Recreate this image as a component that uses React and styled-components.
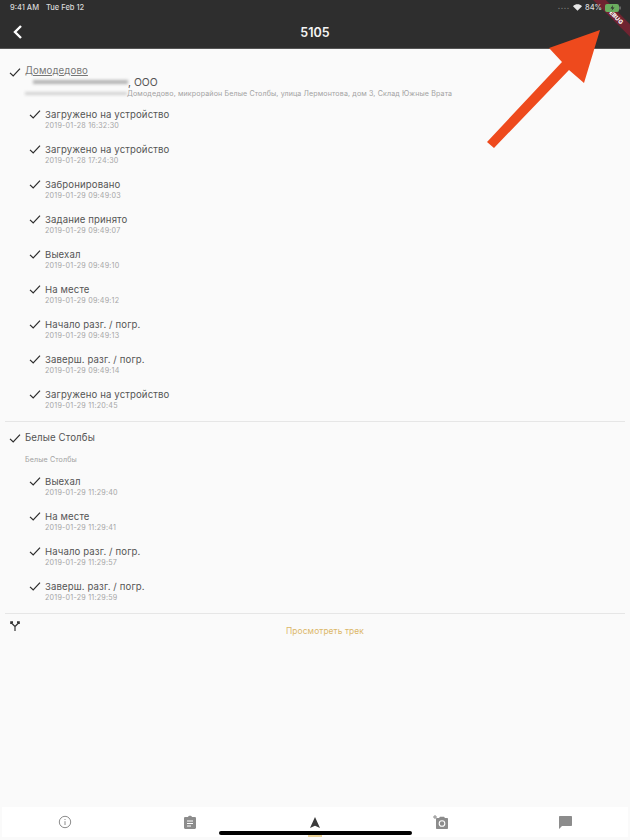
import React from "react";
import styled, { createGlobalStyle } from "styled-components";

const Global = createGlobalStyle`
  html, body { margin: 0; padding: 0; background: #fafafa; }
  body { font-family: "Inter", "Liberation Sans", sans-serif; }
`;

const Page = styled.div`
  position: relative;
  width: 630px;
  height: 840px;
  overflow: hidden;
  display: flex;
  flex-direction: column;
  background: #fafafa;
`;

const Header = styled.header`
  height: 49px;
  flex: none;
  background: #2e2e2e;
  border-bottom: 1px solid #555;
  box-sizing: border-box;
  color: #fff;
  display: flex;
  flex-direction: column;
`;

const StatusBar = styled.div`
  height: 15px;
  padding: 0 9px 0 10px;
  display: flex;
  align-items: center;
  justify-content: space-between;
  font-size: 7.5px;
  font-weight: 500;
  color: #d8d8d8;
`;

const StatusGroup = styled.div`
  position: relative;
  z-index: 2;
  display: flex;
  align-items: center;
  gap: ${(p) => p.$gap || 5}px;
`;

const SignalDots = styled.span`
  color: #777;
  font-size: 8px;
  letter-spacing: 0.6px;
  line-height: 8px;
`;

const NavBar = styled.div`
  flex: 1;
  padding: 1px 13px 0;
  display: flex;
  align-items: center;
  justify-content: space-between;
`;

const NavTitle = styled.div`
  font-size: 12.5px;
  font-weight: 600;
  color: #f4f4f4;
`;

const NavSpacer = styled.div`
  width: 10px;
`;

const Content = styled.main`
  flex: 1;
  padding: 16px 5px 0;
`;

const Stop = styled.section`
  border-bottom: 1px solid #e6e6e6;
`;

const StopHead = styled.div`
  display: flex;
  padding-left: 4px;
  padding-top: ${(p) => p.$top || 0}px;
  gap: 4px;
`;

const Check = styled.svg`
  flex: none;
  width: 12px;
  height: 12px;
  margin-top: ${(p) => p.$top || 0}px;
`;

const StopText = styled.div`
  display: flex;
  flex-direction: column;
  min-width: 0;
`;

const StopTitle = styled.div`
  font-size: 9.7px;
  line-height: 12px;
  color: ${(p) => (p.$struck ? "#777" : "#555")};
  letter-spacing: 0.1px;
  text-decoration: ${(p) => (p.$struck ? "underline" : "none")};
`;

const CompanyLine = styled.div`
  display: flex;
  align-items: center;
  height: 10px;
  padding-left: 8px;
  font-size: 10.4px;
  color: #555;
`;

const AddressLine = styled.div`
  display: flex;
  align-items: center;
  height: 12px;
  margin-top: ${(p) => p.$top || 0}px;
  font-size: 7.1px;
  color: #a2a2a2;
  white-space: nowrap;
  letter-spacing: 0.13px;
`;

const Smudge = styled.div`
  width: ${(p) => p.$w}px;
  height: ${(p) => p.$h}px;
  background: ${(p) => p.$color};
  filter: blur(1.4px);
`;

const Events = styled.div`
  margin-top: ${(p) => p.$top || 0}px;
  display: flex;
  flex-direction: column;
`;

const Event = styled.div`
  height: 35px;
  padding-left: 24px;
  display: flex;
  gap: 4px;

  &:last-child {
    height: 32px;
  }
`;

const EventText = styled.div`
  display: flex;
  flex-direction: column;
`;

const EventName = styled.div`
  font-size: 9.6px;
  line-height: 12px;
  color: #555;
  letter-spacing: 0.12px;
`;

const EventTime = styled.div`
  font-size: 7.2px;
  line-height: 9px;
  color: #a6a6a6;
  letter-spacing: 0.2px;
`;

const TrackRow = styled.div`
  display: flex;
  padding: 6px 0 0 4px;
`;

const TrackIcon = styled.svg`
  flex: none;
  width: 12px;
  height: 12px;
`;

const TrackLink = styled.div`
  flex: 1;
  padding: 5px 0 0 4px;
  text-align: center;
  font-size: 8.4px;
  line-height: 12px;
  color: #dcb768;
  letter-spacing: 0.1px;
`;

const TabBar = styled.nav`
  flex: none;
  height: 30px;
  margin: 0 2px 3px;
  background: #fff;
  display: grid;
  grid-template-columns: repeat(5, 1fr);
  align-items: center;
  justify-items: center;
`;

const HomeIndicator = styled.div`
  position: absolute;
  left: 219px;
  top: 831px;
  width: 193px;
  height: 4px;
  border-radius: 2px;
  background: #000;
`;

const ActiveMark = styled.div`
  position: absolute;
  left: 308px;
  top: 835px;
  width: 14px;
  height: 2px;
  background: #ecd49a;
`;

const Ribbon = styled.div`
  position: absolute;
  right: -16px;
  top: 11px;
  width: 62px;
  height: 9px;
  background: #6f2431;
  color: #fff;
  font-size: 6px;
  font-weight: 800;
  line-height: 9px;
  text-align: center;
  transform: rotate(45deg);
`;

const Arrow = styled.svg`
  position: absolute;
  left: 480px;
  top: 25px;
  width: 150px;
  height: 130px;
`;

const Tick = ({ top }) => (
  <Check $top={top} viewBox="0 0 12 12">
    <path d="M1 6.8 L4.2 10 L11 2.6" fill="none" stroke="#2b2b2b" strokeWidth="1.2" />
  </Check>
);

const firstEvents = [
  ["Загружено на устройство", "2019-01-28 16:32:30"],
  ["Загружено на устройство", "2019-01-28 17:24:30"],
  ["Забронировано", "2019-01-29 09:49:03"],
  ["Задание принято", "2019-01-29 09:49:07"],
  ["Выехал", "2019-01-29 09:49:10"],
  ["На месте", "2019-01-29 09:49:12"],
  ["Начало разг. / погр.", "2019-01-29 09:49:13"],
  ["Заверш. разг. / погр.", "2019-01-29 09:49:14"],
  ["Загружено на устройство", "2019-01-29 11:20:45"],
];

const secondEvents = [
  ["Выехал", "2019-01-29 11:29:40"],
  ["На месте", "2019-01-29 11:29:41"],
  ["Начало разг. / погр.", "2019-01-29 11:29:57"],
  ["Заверш. разг. / погр.", "2019-01-29 11:29:59"],
];

const EventList = ({ items, top }) => (
  <Events $top={top}>
    {items.map(([name, time], i) => (
      <Event key={i}>
        <Tick top={-1} />
        <EventText>
          <EventName>{name}</EventName>
          <EventTime>{time}</EventTime>
        </EventText>
      </Event>
    ))}
  </Events>
);

export default function App() {
  return (
    <Page>
      <Global />
      <Header>
        <StatusBar>
          <StatusGroup $gap={7}>
            <span>9:41 AM</span>
            <span>Tue Feb 12</span>
          </StatusGroup>
          <StatusGroup $gap={3}>
            <SignalDots>····</SignalDots>
            <svg width="9" height="7" viewBox="0 0 11 8">
              <path d="M5.5 8 L0 2.4 C3 -0.6 8 -0.6 11 2.4 Z" fill="#e8e8e8" />
            </svg>
            <span>84%</span>
            <svg width="16" height="8" viewBox="0 0 16 8">
              <rect x="0" y="0" width="14" height="8" rx="2" fill="#6aae5f" />
              <path d="M8 1 L5.5 4.4 H7.5 L6.5 7 L9.5 3.4 H7.5 Z" fill="#2e2e2e" />
              <rect x="14.5" y="2.5" width="1" height="3" fill="#999" />
            </svg>
          </StatusGroup>
        </StatusBar>
        <NavBar>
          <svg width="10" height="14" viewBox="0 0 10 14">
            <path d="M8 1 L2 7 L8 13" fill="none" stroke="#fff" strokeWidth="2.4" />
          </svg>
          <NavTitle>5105</NavTitle>
          <NavSpacer />
        </NavBar>
      </Header>

      <Content>
        <Stop>
          <StopHead>
            <Tick top={1} />
            <StopText>
              <StopTitle $struck>Домодедово</StopTitle>
              <CompanyLine>
                <Smudge $w={95} $h={4} $color="#b4b4b4" />
                , ООО
              </CompanyLine>
              <AddressLine>
                <Smudge $w={102} $h={3} $color="#d0d0d0" />
                Домодедово, микрорайон Белые Столбы, улица Лермонтова, дом 3, Склад Южные Врата
              </AddressLine>
            </StopText>
          </StopHead>
          <EventList items={firstEvents} top={10} />
        </Stop>
        <Stop>
          <StopHead $top={10}>
            <Tick top={0} />
            <StopText>
              <StopTitle>Белые Столбы</StopTitle>
              <AddressLine $top={9}>Белые Столбы</AddressLine>
            </StopText>
          </StopHead>
          <EventList items={secondEvents} top={11} />
        </Stop>
        <TrackRow>
          <TrackIcon viewBox="0 0 12 12">
            <path d="M6 11 V6.5 L2.5 3 M6 6.5 L9.5 3" fill="none" stroke="#333" strokeWidth="1.2" />
            <path d="M1.2 1.2 H4 V3 H3 V4 H1.2 Z M10.8 1.2 H8 V3 H9 V4 H10.8 Z" fill="#333" />
          </TrackIcon>
          <TrackLink>Просмотреть трек</TrackLink>
        </TrackRow>
      </Content>

      <TabBar>
        <svg width="14" height="14" viewBox="0 0 14 14">
          <circle cx="7" cy="7" r="5.7" fill="none" stroke="#8c8c8c" strokeWidth="1" />
          <path d="M7 6.2 V10 M7 4 V5" stroke="#8c8c8c" strokeWidth="1" />
        </svg>
        <svg width="12" height="14" viewBox="0 0 12 14">
          <path d="M1.2 2 H4 C4.3 0.4 7.7 0.4 8 2 H10.8 C11.4 2 12 2.5 12 3 V12.8 C12 13.4 11.4 14 10.8 14 H1.2 C0.6 14 0 13.4 0 12.8 V3 C0 2.5 0.6 2 1.2 2 Z" fill="#8c8c8c" />
          <path d="M3 6 H9 M3 8.5 H9 M3 11 H7" stroke="#fff" strokeWidth="1" />
        </svg>
        <svg width="10" height="11" viewBox="0 0 12 13">
          <path d="M6 0 L12 13 L6 10.4 L0 13 Z" fill="#3a3a3a" />
        </svg>
        <svg width="15" height="14" viewBox="0 0 15 14">
          <path d="M4 3 H6 L7 1.8 H11 L12 3 H14 C14.6 3 15 3.4 15 4 V13 C15 13.6 14.6 14 14 14 H4 C3.4 14 3 13.6 3 13 V4 C3 3.4 3.4 3 4 3 Z" fill="#8c8c8c" />
          <circle cx="9" cy="8.5" r="2.8" fill="none" stroke="#fff" strokeWidth="1.1" />
          <path d="M0 2 H4 M2 0 V4" stroke="#8c8c8c" strokeWidth="1" />
        </svg>
        <svg width="13" height="13" viewBox="0 0 13 13">
          <path d="M1 0 H12 C12.6 0 13 0.4 13 1 V9 C13 9.6 12.6 10 12 10 H3 L0 13 V1 C0 0.4 0.4 0 1 0 Z" fill="#8c8c8c" />
        </svg>
      </TabBar>

      <HomeIndicator />
      <ActiveMark />
      <Ribbon>DEBUG</Ribbon>
      <Arrow viewBox="0 0 150 130">
        <path d="M120 5 L69 23 L82 37 L7 117 L14 123 L89 45 L104 58 Z" fill="#ee4a1d" />
      </Arrow>
    </Page>
  );
}
